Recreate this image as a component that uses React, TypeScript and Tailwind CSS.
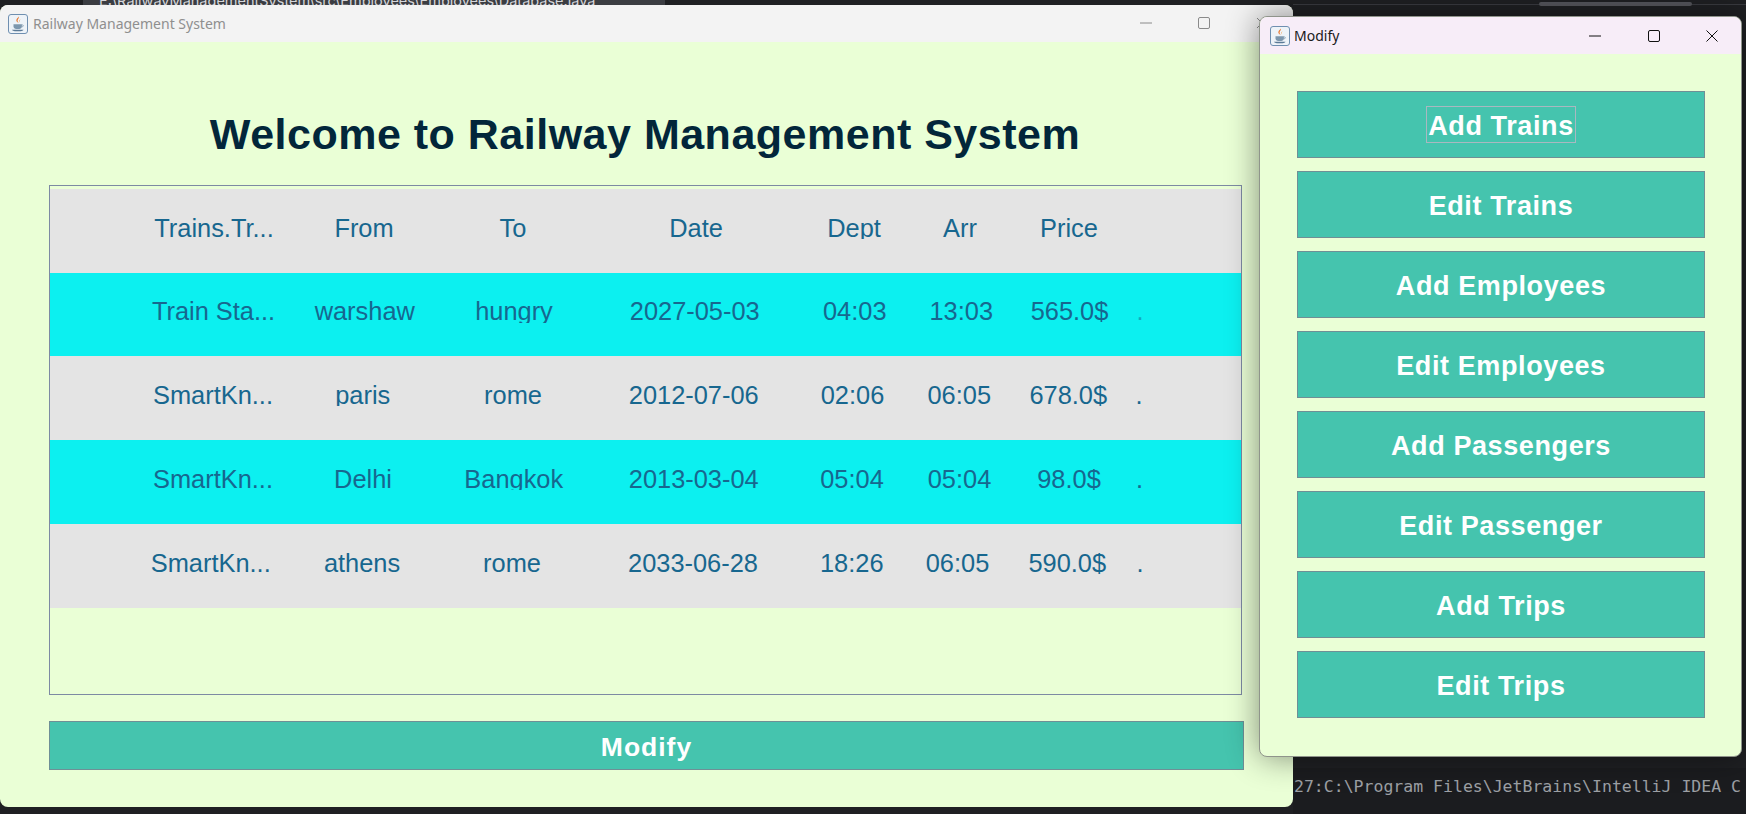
import React from 'react';

const SANS = 'font-["Liberation_Sans",Arial,sans-serif]';

const header = ['Trains.Tr...', 'From', 'To', 'Date', 'Dept', 'Arr', 'Price', ''];

// each row in the swing table sits a little off the others, so every row keeps its own tracks
const rows = [
  {
    cells: ['Train Sta...', 'warshaw', 'hungry', '2027-05-03', '04:03', '13:03', '565.0$', '.'],
    bg: 'bg-[#0cf0f0] h-[83px] leading-[77px]',
    tracks: 'grid-cols-[127px_175.5px_123px_238.5px_81.5px_131.5px_85px_56px]',
    dot: 'opacity-50',
  },
  {
    cells: ['SmartKn...', 'paris', 'rome', '2012-07-06', '02:06', '06:05', '678.0$', '.'],
    bg: 'bg-[#e4e4e4] h-[84px] leading-[79px]',
    tracks: 'grid-cols-[126px_173.5px_127px_234.5px_83px_130.5px_87.5px_54px]',
    dot: '',
  },
  {
    cells: ['SmartKn...', 'Delhi', 'Bangkok', '2013-03-04', '05:04', '05:04', '98.0$', '.'],
    bg: 'bg-[#0cf0f0] h-[84px] leading-[79px]',
    tracks: 'grid-cols-[126px_174px_127.5px_232.5px_84px_131px_88px_53px]',
    dot: '',
  },
  {
    cells: ['SmartKn...', 'athens', 'rome', '2033-06-28', '18:26', '06:05', '590.0$', '.'],
    bg: 'bg-[#e4e4e4] h-[84px] leading-[79px]',
    tracks: 'grid-cols-[121.5px_181px_119px_243px_74.5px_137px_82.5px_63px]',
    dot: '',
  },
];

const actions = ['Add Trains', 'Edit Trains', 'Add Employees', 'Edit Employees', 'Add Passengers', 'Edit Passenger', 'Add Trips', 'Edit Trips'];

function JavaIcon() {
  return (
    <svg width="20" height="20" viewBox="0 0 20 20" className="shrink-0">
      <rect x="0.5" y="0.5" width="19" height="19" rx="2.5" fill="#eef3f8" stroke="#6f8fb0" />
      <path d="M10.5 2.5c1.2 2-1.8 3-.6 5.2.3.6.7.9.9 1.2-1.9-.6-3-2-2.2-3.6.5-1 1.6-1.6 1.9-2.8z" fill="#e8762d" />
      <path d="M12.3 5.2c.2 1.2-1.2 2-.8 3.3-.8-1-.2-2.4.8-3.3z" fill="#f0a050" />
      <path d="M5.5 10.2h8.4v2.2c0 1.5-1.3 2.5-2.7 2.5H8.2c-1.4 0-2.7-1-2.7-2.5z" fill="#7d97ad" />
      <path d="M13.9 10.8c1.4-.2 1.9 1.5.2 2.2" fill="none" stroke="#7d97ad" strokeWidth="0.9" />
      <path d="M4 15.8h11.5c-.7 1-1.6 1.4-2.8 1.4H6.8c-1.2 0-2.1-.4-2.8-1.4z" fill="#5b7a96" />
    </svg>
  );
}

function WindowControls({ color }: { color: string }) {
  return (
    <svg width="12" height="2" viewBox="0 0 12 2"><path d="M0 1h12" stroke={color} strokeWidth="1" /></svg>
  );
}

function MainWindow() {
  return (
    <div className="absolute left-0 top-[5px] flex h-[802px] w-[1293px] flex-col overflow-hidden rounded-lg bg-[#eaffd6]">
      <div className="relative flex h-[37px] shrink-0 items-center bg-[#f3f3f3] pl-[8px]">
        <JavaIcon />
        <span className='ml-[5px] font-["Noto_Sans",sans-serif] text-[14px] text-[#8f8f8f]'>Railway Management System</span>
        <div className="ml-auto mr-[25px] flex items-center gap-[46px] pb-[1px]">
          <WindowControls color="#8a8a8a" />
          <svg width="12" height="12" viewBox="0 0 12 12"><rect x="0.5" y="0.5" width="11" height="11" rx="1.5" fill="none" stroke="#8a8a8a" /></svg>
          <svg width="12" height="12" viewBox="0 0 12 12"><path d="M1 1l10 10M11 1L1 11" stroke="#8a8a8a" /></svg>
        </div>
      </div>

      <div className={`flex h-[143px] shrink-0 items-center justify-center pr-[3px] pt-[42px] ${SANS}`}>
        <h1 className="text-[43px] font-bold tracking-[0.5px] text-[#02263a]">Welcome to Railway Management System</h1>
      </div>

      <div className={`ml-[49px] h-[510px] w-[1193px] shrink-0 border border-[#7d8aa3] pt-[3px] text-[25.4px] text-[#17678f] ${SANS}`}>
        <div className="grid h-[84px] grid-cols-[128px_172px_126px_240px_76px_136px_82px_58px] bg-[#e4e4e4] pl-[100px] leading-[79px]">
          {header.map((h, i) => (
            <div key={i} className="h-[50px] overflow-hidden whitespace-nowrap text-center">{h}</div>
          ))}
        </div>
        {rows.map((row) => (
          <div key={row.cells[0] + row.cells[1]} className={`grid pl-[100px] ${row.tracks} ${row.bg}`}>
            {row.cells.map((c, i) => (
              <div key={i} className={`h-[50px] overflow-hidden whitespace-nowrap text-center ${i === 7 ? row.dot : ''}`}>{c}</div>
            ))}
          </div>
        ))}
      </div>

      <button className={`ml-[49px] mt-[26px] h-[49px] w-[1195px] shrink-0 border border-[#6f8f96] bg-[#45c4ae] pt-[4px] text-[26.5px] font-bold tracking-[1px] text-white ${SANS}`}>
        Modify
      </button>
    </div>
  );
}

function ModifyWindow() {
  return (
    <div className="absolute left-[1259px] top-[16px] flex h-[741px] w-[483px] flex-col overflow-hidden rounded-lg border border-[#8f948b] bg-[#eaffd6] shadow-[0_0_32px_rgba(0,0,0,0.45)]">
      <div className="flex h-[37px] shrink-0 items-center bg-[#f7edf8] pl-[10px]">
        <JavaIcon />
        <span className='ml-[4px] font-["Noto_Sans",sans-serif] text-[14px] text-[#1a1a1a]'>Modify</span>
        <div className="ml-auto mr-[23px] flex items-center gap-[46.5px]">
          <WindowControls color="#111111" />
          <svg width="12" height="12" viewBox="0 0 12 12"><rect x="0.5" y="0.5" width="11" height="11" rx="1.5" fill="none" stroke="#111111" /></svg>
          <svg width="12" height="12" viewBox="0 0 12 12"><path d="M0.5 0.5l11 11M11.5 0.5l-11 11" stroke="#111111" /></svg>
        </div>
      </div>
      <div className={`flex flex-col gap-[13px] pl-[37px] pt-[37px] ${SANS}`}>
        {actions.map((a, i) => (
          <button key={a} className="flex h-[67px] w-[408px] items-center justify-center border border-[#6f8f96] bg-[#45c4ae] text-[27px] font-bold tracking-[0.6px] text-white">
            <span className={i === 0 ? 'border border-[#a9b8c0] px-[1px] pt-[4px] leading-[31px]' : 'border border-transparent px-[1px] pt-[4px] leading-[31px]'}>{a}</span>
          </button>
        ))}
      </div>
    </div>
  );
}

export default function App() {
  return (
    <div className="relative h-[814px] w-[1746px] overflow-hidden bg-[#1f2023]">
      {/* IDE behind the two windows */}
      <div className="flex h-[5px] items-start overflow-hidden">
        <div className="ml-[83px] flex h-[5px] w-[582px] bg-[#3b3d42] pl-[16px]">
          <span className='-mt-[9px] whitespace-nowrap font-["Inter",sans-serif] text-[14.5px] leading-[20px] text-[#d5d6da]'>E:\RailwayManagementSystem\src\Employees\Employees\Database.java</span>
        </div>
      </div>
      <div className="absolute left-[1293px] right-0 top-[4px] h-px bg-[#3a3b40]" />
      <div className="absolute left-[1539px] top-[2px] h-[4px] w-[153px] rounded-full bg-[#55565c]" />
      <div className="absolute left-[1293px] right-0 top-[768px] h-[46px] overflow-hidden bg-[#1b1c1f] pl-[1px]">
        <div className="flex h-[39px] items-center">
          <span className='whitespace-pre font-["DejaVu_Sans_Mono",monospace] text-[16.5px] text-[#9da0a5]'>27:C:\Program Files\JetBrains\IntelliJ IDEA C</span>
        </div>
      </div>
      <MainWindow />
      <ModifyWindow />
    </div>
  );
}
